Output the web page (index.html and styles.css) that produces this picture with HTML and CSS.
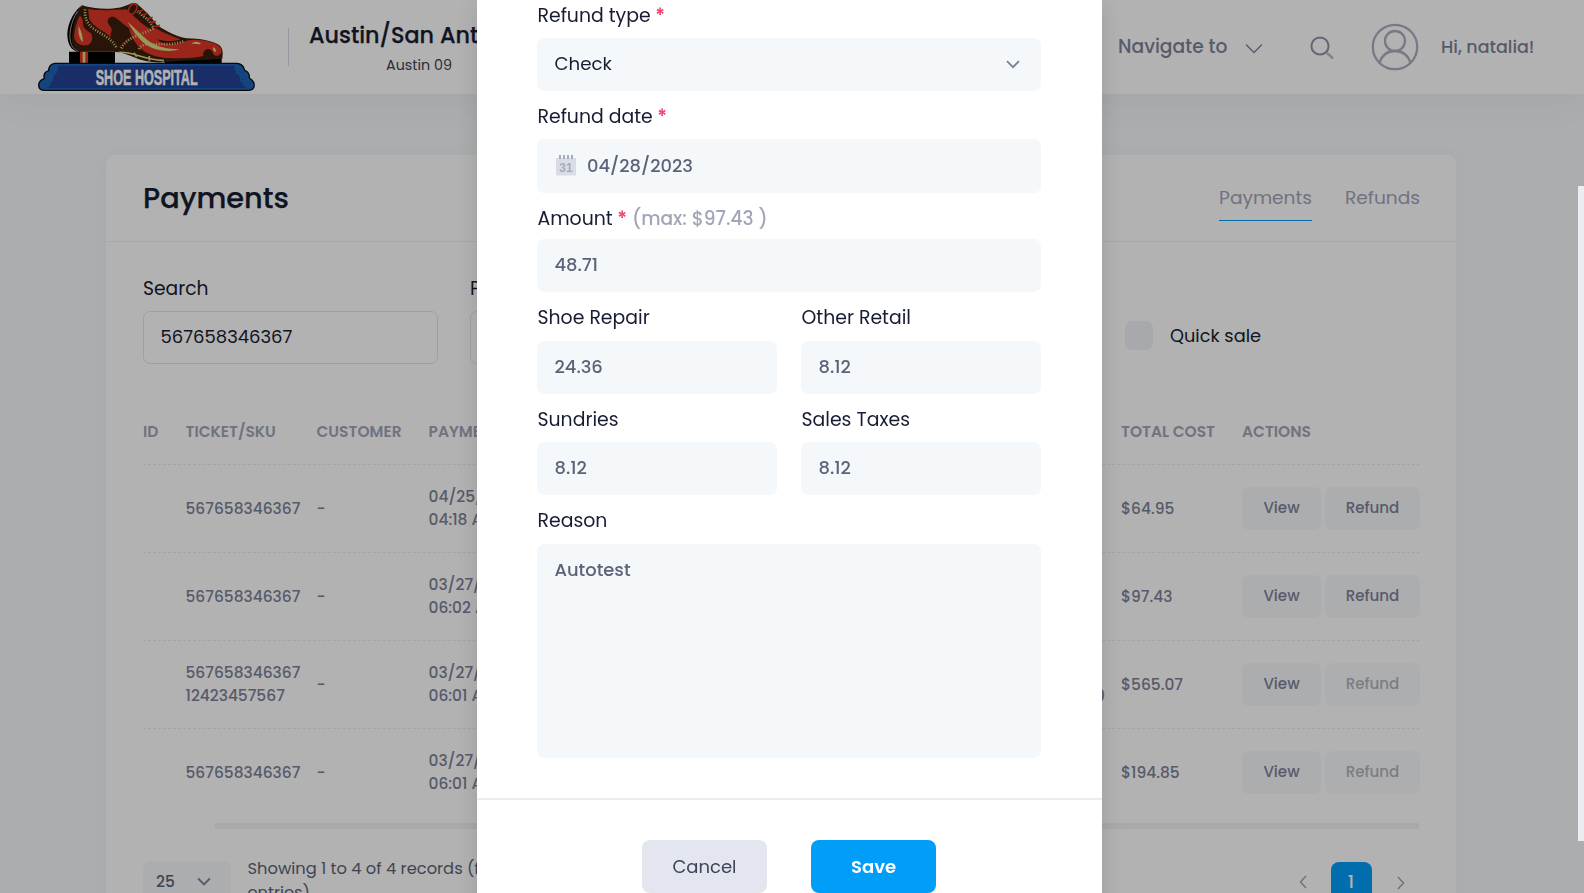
FILE: index.html
```html
<!DOCTYPE html>
<html lang="en">
<head>
<meta charset="utf-8">
<title>Payments</title>
<link rel="stylesheet" href="styles.css">
</head>
<body>
<header class="header">
  <svg class="logo" viewBox="0 0 690 288" width="230" height="96">
    <path fill="#000" d="M117 155H255V190H117ZM404 175H575V190H404Z"/>
    <path fill="#dc3628" d="M150 155H174V190H150Z"/><path fill="#dcd880" d="M158 155H166V190H158Z"/>
    <path fill="#000" d="M156 16C124 40 108 84 113 116C117 142 130 154 150 156L160 150L140 40Z"/>
    <path fill="none" stroke="#f2f2f2" stroke-width="2" d="M142 34C122 66 114 110 124 134C129 145 137 151 146 153"/>
    <path fill="#3c1d0e" d="M156 16C180 24 210 27 240 26C266 25 284 20 298 13C308 8 318 8 324 14C346 32 366 52 380 74C404 92 438 108 470 115C510 116 545 122 566 134C578 142 580 156 577 176C520 181 460 180 408 186C372 190 340 184 312 172C292 162 272 156 250 155H148C128 146 122 126 127 100C132 66 138 36 156 16Z"/>
    <path fill="#dc3628" d="M174 27C205 32 244 31 290 28C300 42 314 50 322 58C340 78 364 86 366 92C340 98 300 112 280 132C274 136 268 140 264 142C250 124 244 112 234 104C218 92 190 80 178 58Z"/>
    <path fill="#3c1d0e" d="M258 54C246 46 233 52 233 66C235 78 250 82 244 96C238 108 244 128 262 146C276 130 300 112 322 104L300 86C284 78 270 62 258 54Z"/>
    <path fill="#dc3628" d="M149 48C139 66 131 96 133 114C137 132 158 141 176 134C189 126 190 108 181 98C168 90 160 86 159 70C159 60 156 50 149 48Z"/>
    <path fill="#dc3628" d="M372 82C390 94 424 108 452 118C436 126 400 124 382 118C392 132 420 138 460 126C480 116 512 118 540 126C564 132 578 144 574 158C566 170 552 172 548 156C538 138 516 150 520 168C490 176 440 176 404 174C360 168 340 156 322 136C308 118 300 100 296 84C310 96 326 100 338 100C350 96 364 90 372 82Z"/>
    <path fill="#dcd880" d="M293 65C316 84 348 124 380 136C402 146 430 148 448 148C428 156 394 154 366 144C334 130 310 96 293 65ZM146 78C143 98 148 116 158 127C160 114 154 92 146 78ZM484 132C492 122 506 124 513 132C504 134 494 130 484 132ZM549 142C557 144 560 152 556 157C550 154 548 148 549 142Z"/>
    <path fill="none" stroke="#dcd880" stroke-width="8" stroke-dasharray="3 5" d="M165 28C164 52 170 70 188 84C214 104 244 112 261 146M274 145C290 112 334 104 370 86M322 34C340 48 362 64 370 84M328 148C330 138 340 134 350 133C390 132 430 136 464 122"/>
    <path fill="none" stroke="#dcd880" stroke-width="5" d="M266 157C310 154 330 176 402 182M312 158L320 170M358 168V182"/>
    <ellipse cx="308" cy="27" rx="11" ry="17" transform="rotate(28 308 27)" fill="#3c1d0e" stroke="#dc3628" stroke-width="5"/>
    <path fill="none" stroke="#dc3628" stroke-width="5" d="M322 36L340 30M336 46L354 40M350 57L368 52M362 68L378 64M374 80L390 76"/>
    <path fill="#1e63b5" stroke="#080d18" stroke-width="4" stroke-linejoin="round" d="M74 190H622C636 192 642 200 644 211C655 215 659 224 658 234C670 240 675 252 672 261C669 268 664 271 656 271H44C32 271 26 264 26 254C27 244 34 239 43 236C40 224 45 215 56 212C56 200 62 192 74 190Z"/>
    <path fill="#254295" d="M84 197H614C610 208 618 216 630 215C622 226 630 238 642 238C630 250 644 262 650 264H50C58 260 70 250 58 240C70 238 76 228 70 216C82 214 86 206 84 197Z"/>
    <path fill="none" stroke="#1e63b5" stroke-width="8" stroke-linecap="round" d="M64 214C68 224 78 220 77 212M50 238C54 250 66 244 65 238M634 214C630 224 620 220 621 212M648 238C644 250 632 244 633 238"/>
    <text class="logo-text" x="197" y="255" textLength="306" lengthAdjust="spacingAndGlyphs">SHOE HOSPITAL</text>
  </svg>
  <span class="divider"></span>
  <div class="store">
    <div class="store-name">Austin/San Antonio</div>
    <div class="store-sub">Austin 09</div>
  </div>
  <nav class="nav">
    <span class="nav-link">Navigate to</span>
    <svg class="nav-chev" width="18" height="12" viewBox="0 0 18 12"><path d="M1 1.5L9 9.5L17 1.5"/></svg>
    <svg class="nav-search" width="24" height="24" viewBox="0 0 24 24"><circle cx="10" cy="10" r="8.6"/><path class="faint" d="M16.5 16.5L23 22.5"/></svg>
    <svg class="nav-avatar" width="48" height="48" viewBox="0 0 48 48"><circle cx="24" cy="24" r="22.2"/><circle cx="24" cy="18" r="10"/><path d="M8.5 40C11 32 16.5 28 24 28S37 32 39.500 40"/></svg>
    <span class="nav-user">Hi, natalia!</span>
  </nav>
</header>

<main class="card">
  <div class="card-head">
    <h1>Payments</h1>
    <div class="tabs"><span class="tab active">Payments</span><span class="tab">Refunds</span></div>
  </div>
  <div class="filters">
    <div class="filter"><label>Search</label><div class="box">567658346367</div></div>
    <div class="filter"><label>Payment type</label><div class="box"></div></div>
    <div class="check"><span class="tick"></span>Quick sale</div>
  </div>
  <div class="table">
    <div class="tr th"><span>ID</span><span>TICKET/SKU</span><span>CUSTOMER</span><span>PAYMENT DATE</span><span></span><span>TOTAL COST</span><span>ACTIONS</span></div>
    <div class="tr"><span></span><span>567658346367</span><span>-</span><span class="two">04/25/2023<br>04:18 AM</span><span></span><span>$64.95</span><span class="acts"><b>View</b><b class="wide">Refund</b></span></div>
    <div class="tr"><span></span><span>567658346367</span><span>-</span><span class="two">03/27/2023<br>06:02 AM</span><span></span><span>$97.43</span><span class="acts"><b>View</b><b class="wide">Refund</b></span></div>
    <div class="tr"><span></span><span class="two">567658346367<br>12423457567</span><span>-</span><span class="two">03/27/2023<br>06:01 AM</span><span class="sum two"><br>$0.00</span><span>$565.07</span><span class="acts"><b>View</b><b class="wide off">Refund</b></span></div>
    <div class="tr"><span></span><span>567658346367</span><span>-</span><span class="two">03/27/2023<br>06:01 AM</span><span></span><span>$194.85</span><span class="acts"><b>View</b><b class="wide off">Refund</b></span></div>
  </div>
  <div class="hbar"></div>
  <div class="foot">
    <div class="size">25<svg width="14" height="10" viewBox="0 0 14 10"><path d="M1.200 1.500L7 7.500L12.800 1.500"/></svg></div>
    <p>Showing 1 to 4 of 4 records (filtered<br>entries)</p>
    <div class="pager">
      <svg width="8" height="14" viewBox="0 0 8 14"><path d="M7 1L1.500 7L7 13"/></svg>
      <span class="page">1</span>
      <svg class="next" width="8" height="14" viewBox="0 0 8 14"><path d="M1 1L6.500 7L1 13"/></svg>
    </div>
  </div>
</main>

<div class="overlay">
  <section class="modal">
    <div class="modal-body">
      <label>Refund type <i>*</i></label>
      <div class="field select">Check<svg width="14" height="9" viewBox="0 0 14 9"><path d="M1 1.200L7 7.200L13 1.200"/></svg></div>
      <label>Refund date <i>*</i></label>
      <div class="field date">
        <svg width="20" height="21" viewBox="0 0 20 21"><path fill="#d9dce5" d="M0 3H20V20.500H0Z"/><path fill="#a6a9bd" d="M3 0H5V4H3ZM7 0H9V4H7ZM11 0H13V4H11ZM15 0H17V4H15Z"/><text class="cal" x="10" y="16.500" text-anchor="middle">31</text></svg>04/28/2023</div>
      <label class="tight">Amount <i>*</i> <em>(max: $97.43 )</em></label>
      <div class="field short">48.71</div>
      <div class="pair">
        <div><label>Shoe Repair</label><div class="field">24.36</div></div>
        <div><label>Other Retail</label><div class="field">8.12</div></div>
      </div>
      <div class="pair second">
        <div><label>Sundries</label><div class="field">8.12</div></div>
        <div><label>Sales Taxes</label><div class="field">8.12</div></div>
      </div>
      <label class="loose">Reason</label>
      <div class="field area">Autotest</div>
    </div>
    <div class="modal-foot"><span class="btn cancel">Cancel</span><span class="btn save">Save</span></div>
  </section>
</div>
<div class="scroll-thumb"></div>
</body>
</html>
```

FILE: styles.css
```css
* { box-sizing: border-box; }
html, body { height: 100%; }
body { margin: 0; overflow: hidden; background: #f5f8fa; color: #181c32; font: 400 18px/28px "Poppins", sans-serif; }
svg { display: block; flex: none; fill: none; }

.header { position: relative; display: flex; height: 94px; padding-left: 30px; background: #fff; box-shadow: 0 10px 30px 0 rgba(82, 63, 105, .05); }
.logo-text { font: 700 66px "Liberation Sans", Arial, sans-serif; fill: #fff; stroke: #fff; stroke-width: 1.5; }
.divider { width: 1px; height: 38px; margin: 28px 18px 0 28px; background: #d8d8e6; }
.store { width: 224px; text-align: center; white-space: nowrap; color: #181c32; }
.store-name { margin: 22px 2px 0 0; font-size: 22.300px; line-height: 28px; font-weight: 500; -webkit-text-stroke: .25px #181c32; }
.store-sub { margin-top: 5px; font-size: 14.3px; line-height: 20px; color: #3f4254; }
.nav { display: flex; align-items: center; margin-left: auto; padding-right: 46px; color: #7e8299; font-weight: 500; white-space: nowrap; }
.nav-link { width: 127px; font-size: 18.7px; }
.nav-chev { margin-top: 3px; stroke: #7e8299; stroke-width: 1.3; }
.nav-search { margin: 1px 37px 0 47px; stroke: #8b92a8; stroke-width: 2; }
.nav-search .faint { stroke: #bcbccb; stroke-width: 2.4; }
.nav-avatar { margin-right: 22px; stroke: #b0abbe; stroke-width: 2.3; }
.nav-user { width: 97px; font-size: 17.450px; }

.card { width: 1350px; height: 760px; margin: 61px 0 0 106px; border-radius: 9px; background: #fff; box-shadow: 0 0 20px 0 rgba(76, 87, 125, .03); }
.card-head { display: flex; justify-content: space-between; align-items: center; height: 87px; padding: 0 36px 0 37px; border-bottom: 1px solid #eff2f5; }
h1 { margin: 0; font-size: 28.800px; line-height: 40px; font-weight: 500; -webkit-text-stroke: .25px #181c32; }
.tabs { display: flex; gap: 33px; margin-top: 2px; color: #a1a5b7; font-size: 18.600px; }
.tab { padding: 7px 0 8px; }
.tab.active { border-bottom: 1px solid #009ef7; }

.filters { display: flex; height: 157px; padding: 33px 0 0 37px; font-size: 18px; }
.filter { width: 295px; margin-right: 32px; }
.filter label { display: block; font-size: 18.700px; }
.box { height: 53px; margin-top: 8px; padding: 0 16.500px; border: 1px solid #e4e6ef; border-radius: 7px; line-height: 49px; }
.check { display: flex; align-items: center; height: 30px; margin: 46px 0 0 328px; font-size: 17.750px; }
.tick { width: 28px; height: 29px; margin: -1px 17px 0 0; border-radius: 7px; background: #f0f3f6; }

.table { width: 1277px; margin-left: 37px; color: #7e8299; font-size: 15.450px; line-height: 23px; font-weight: 500; }
.tr { display: grid; grid-template-columns: 42.5px 131px 112px 120px 572.5px 121px 178px; align-items: center; height: 88px; border-bottom: 1px dashed #e9ebf0; }
.tr:last-child { border-bottom: 0; height: 87px; }
.tr.th { height: 66px; padding-bottom: 1px; color: #a1a5b7; font-weight: 600; white-space: nowrap; }
.two { padding-bottom: 2px; }
.sum { padding-right: 16px; text-align: right; }
.acts { display: flex; gap: 4px; }
.acts b { width: 79px; height: 43px; border-radius: 7px; background: #f5f8fa; font-size: 15.100px; line-height: 42px; font-weight: 500; text-align: center; }
.acts b.wide { width: 95px; }
.acts b.off { opacity: .6; }
.hbar { width: 1204px; height: 6px; margin: 7px 0 0 109px; background: #eff2f5; }

.foot { display: flex; margin: 32px 36px 0 37px; color: #5e6278; font-size: 16.300px; line-height: 23.500px; }
.size { display: flex; align-items: center; justify-content: space-between; width: 88px; height: 43px; padding: 0 20px 2px 13px; border-radius: 8px; background: #f5f8fa; font-size: 15.500px; font-weight: 500; }
.size svg { stroke: #7e8299; stroke-width: 1.800; }
.foot p { margin: -4px 0 0 16.500px; white-space: nowrap; }
.pager { display: flex; margin-left: auto; padding-right: 15.500px; }
.pager svg { margin-top: 14px; stroke: #a1a5b7; stroke-width: 1.500; }
.pager svg.next { margin-top: 15px; }
.page { width: 41px; height: 42px; margin: 1px 25px 0 24px; border-radius: 8px; background: #009ef7; color: #fff; font-size: 18px; line-height: 39px; font-weight: 500; text-align: center; }

.overlay { position: fixed; inset: 0; background: rgba(0, 0, 0, .3); }
.modal { width: 625px; height: 920px; margin-left: 477px; background: #fff; box-shadow: 0 0 24px 0 rgba(0, 0, 0, .13); }
.modal-body { height: 800px; padding: 2px 61px 0 60px; border-bottom: 2px solid #ebedf3; }
.modal label { display: block; margin-top: 12px; margin-bottom: 8px; padding-left: .5px; height: 28px; font-size: 18.850px; white-space: nowrap; }
.modal-body > label:first-child { margin-top: 0; }
.modal label.tight { margin-bottom: 6px; }
.modal label.loose { margin-bottom: 9px; }
.modal i { margin-left: -.5px; font-style: normal; font-weight: 600; color: #f1416c; }
.modal em { font-style: normal; font-size: 18.600px; font-weight: 500; color: #a1a5b7; }
.field { height: 53px; padding: 0 17.500px; border-radius: 7px; background: #f5f8fa; color: #5e6278; font-size: 17.900px; line-height: 51px; font-weight: 500; }
.field.select { display: flex; justify-content: space-between; padding-right: 21px; color: #181c32; font-size: 18.200px; font-weight: 400; }
.field.select svg { margin-top: 22px; stroke: #7e8299; stroke-width: 1.900; }
.field.date { display: flex; align-items: center; gap: 11px; height: 54px; padding: 0 0 1px 19px; }
.cal { font: 700 12px "Liberation Sans", Arial, sans-serif; fill: #a6a9bd; }
.pair { display: grid; grid-template-columns: 240px 240px; gap: 24px; padding-top: 12px; }
.pair label { margin-top: 0; margin-bottom: 9px; }
.pair.second label { margin-bottom: 8px; }
.field.area { height: 214px; }
.modal-foot { display: flex; justify-content: center; gap: 44px; padding: 40px 1px 0 0; }
.btn { width: 125px; height: 53px; border-radius: 8px; font-size: 18px; line-height: 53px; font-weight: 500; text-align: center; }
.cancel { background: #e4e6ef; color: #3f4254; font-weight: 400; }
.save { background: #009ef7; color: #fff; font-weight: 600; }
.scroll-thumb { position: fixed; top: 186px; right: 0; width: 6px; height: 655px; background: #ebedf3; }
```
